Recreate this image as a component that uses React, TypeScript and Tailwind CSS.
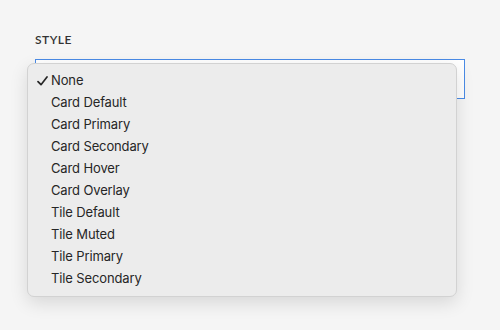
import React from "react";

const options = [
  "None",
  "Card Default",
  "Card Primary",
  "Card Secondary",
  "Card Hover",
  "Card Overlay",
  "Tile Default",
  "Tile Muted",
  "Tile Primary",
  "Tile Secondary",
];

export default function App() {
  const selected = "None";
  return (
    <div className="w-[500px] h-[330px] bg-[#f5f5f5] overflow-hidden">
      <div className="pt-[33px] pl-[35px] w-[465px]">
        <label className="block text-[12px] leading-[14px] font-semibold tracking-[0.04em] text-[#333] font-['Lato','Liberation_Sans',sans-serif]">
          STYLE
        </label>
        <div className="relative mt-[12px]">
          <div className="h-[40px] border border-[#4a8be6] bg-white" />
          <div className="absolute left-[-8px] top-[4px] w-[430px] rounded-[7px] border border-[#d2d2d2] bg-[#ececec] py-[6px] shadow-[0_6px_18px_rgba(0,0,0,0.12)] font-['Inter','Liberation_Sans',sans-serif]">
            {options.map((o) => (
              <div key={o} className="flex items-center h-[22px] text-[13px] tracking-[-0.01em] text-[#262626]">
                <span className="flex w-[23px] pl-[9px]">
                  {o === selected && (
                    <svg width="11" height="10" viewBox="0 0 11 10" fill="none">
                      <path d="M1 5.6 L4 8.7 L10 1" stroke="#262626" strokeWidth="1.7" strokeLinecap="round" strokeLinejoin="round" />
                    </svg>
                  )}
                </span>
                <span>{o}</span>
              </div>
            ))}
          </div>
        </div>
      </div>
    </div>
  );
}
